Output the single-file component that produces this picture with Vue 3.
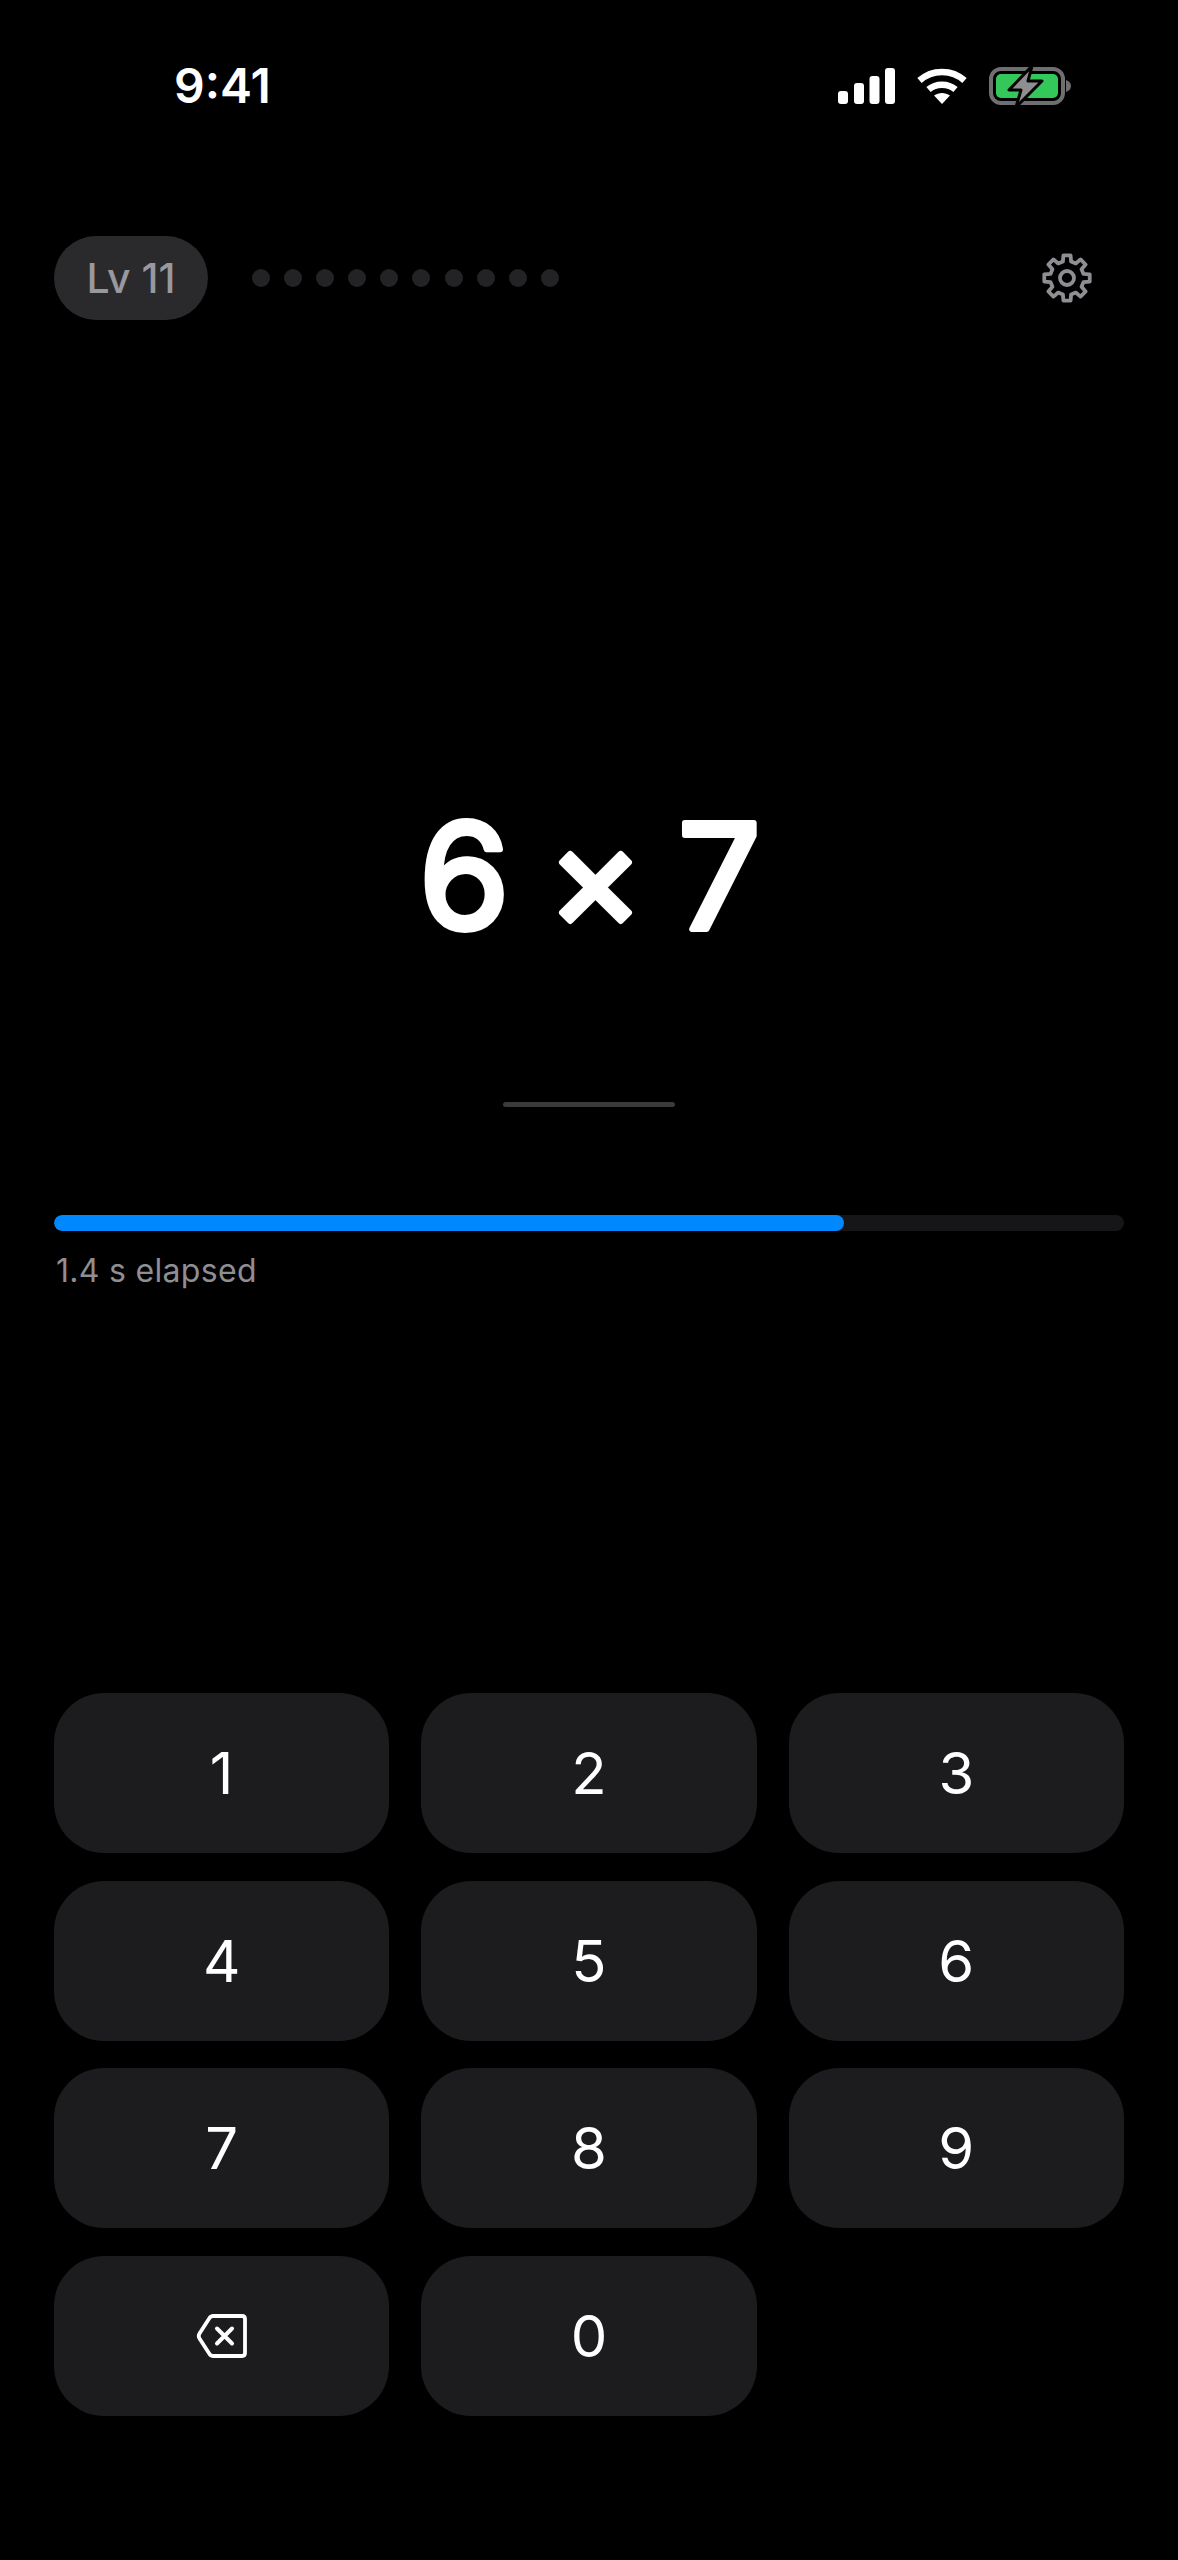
<template>
  <div class="screen">
    <!-- Status bar -->
    <div class="status">
      <span class="time">9:41</span>
      <div class="status-icons">
        <svg class="signal" width="57" height="36" viewBox="0 0 57 36" fill="#fff">
          <rect x="0" y="23" width="10" height="13" rx="3" />
          <rect x="16" y="15" width="10" height="21" rx="3" />
          <rect x="31.500" y="8" width="10" height="28" rx="3" />
          <rect x="47" y="0" width="10" height="36" rx="3" />
        </svg>
        <svg class="wifi" width="50" height="37" viewBox="0 0 50 37" fill="none" stroke="#fff" stroke-width="6.500">
          <path d="M2.500 12.500 C15 1 35 1 47.500 12.500" />
          <path d="M11.500 21.500 C19 15 31 15 38.500 21.500" />
          <path d="M17 27.500 C22 24 28 24 33 27.500 L25 36 Z" fill="#fff" stroke="none" />
        </svg>
        <svg class="battery" width="82" height="38" viewBox="0 0 82 38" fill="none">
          <rect x="2" y="2" width="72" height="34" rx="10" stroke="#6f6f71" stroke-width="4" />
          <rect x="7" y="7" width="62" height="24" rx="5" fill="#34c759" />
          <path d="M77 13 C80 14 82 16 82 19 C82 22 80 24 77 25 Z" fill="#6f6f71" />
          <path d="M43 -1 L20 23 H32 L27 40 L53 14 H39 Z" fill="#8e8e90" stroke="#000" stroke-width="3" stroke-linejoin="round" />
        </svg>
      </div>
    </div>

    <!-- Level and settings -->
    <div class="top-row">
      <div class="level">Lv 11</div>
      <div class="dots">
        <span v-for="n in 10" :key="n" class="dot"></span>
      </div>
      <svg class="gear" width="52" height="52" viewBox="0 0 52 52" fill="none" stroke="#8e8e93" stroke-width="3.800" stroke-linejoin="round">
        <path :d="gearPath" />
        <circle cx="26" cy="26" r="7" />
      </svg>
    </div>

    <!-- Question -->
    <svg class="question" width="1178" height="190" viewBox="0 0 1178 190">
      <text class="question-text" y="149">
        <tspan x="419">6</tspan>
        <tspan x="547" class="times">×</tspan>
        <tspan x="678">7</tspan>
      </text>
    </svg>

    <div class="answer-line"></div>

    <!-- Timer -->
    <div class="progress">
      <div class="progress-fill" :style="{ width: progress + '%' }"></div>
    </div>
    <div class="elapsed">1.4 s elapsed</div>

    <!-- Keypad -->
    <div class="keypad">
      <button v-for="k in keys" :key="k" class="key">{{ k }}</button>
      <button class="key" aria-label="Delete">
        <svg width="52" height="46" viewBox="0 0 52 46" fill="none" stroke="#fff" stroke-width="3.800" stroke-linejoin="round" stroke-linecap="round">
          <path d="M17 3 H46 Q49 3 49 6 V40 Q49 43 46 43 H17 Q15.500 43 14 41.800 L3.500 25.500 Q2 23 3.500 20.500 L14 4.200 Q15.500 3 17 3 Z" />
          <path d="M21 15.500 L36 30.500 M36 15.500 L21 30.500" stroke-width="4" />
        </svg>
      </button>
      <button class="key">0</button>
    </div>
  </div>
</template>

<script setup>
  import { computed, ref } from "vue";

  const keys = ["1", "2", "3", "4", "5", "6", "7", "8", "9"];
  const progress = ref(73.8);

  // Gear outline with 8 teeth
  const gearPath = computed(() => {
    const c = 26;
    const outer = 23;
    const inner = 17;
    const pts = [];
    for (let i = 0; i < 8; i++) {
      const a = (i * Math.PI) / 4 - Math.PI / 2;
      const s = Math.PI / 8;
      const at = (r, t) => [c + r * Math.cos(t), c + r * Math.sin(t)];
      pts.push(at(inner, a - s * 0.62), at(outer, a - s * 0.4), at(outer, a + s * 0.4), at(inner, a + s * 0.62));
    }
    return "M" + pts.map((p) => p[0].toFixed(2) + " " + p[1].toFixed(2)).join(" L") + " Z";
  });
</script>

<style scoped>
  .screen {
    width: 1178px;
    height: 2560px;
    background: #000;
    color: #fff;
    font-family: Inter, "Liberation Sans", sans-serif;
    overflow: hidden;
    display: flex;
    flex-direction: column;
  }

  .status {
    height: 38px;
    margin-top: 67px;
    padding: 0 107px 0 174px;
    display: flex;
    justify-content: space-between;
    align-items: center;
  }

  .time {
    font-size: 48px;
    font-weight: 600;
    line-height: 38px;
  }

  .status-icons {
    display: flex;
    align-items: center;
    gap: 22px;
  }

  .top-row {
    margin-top: 131px;
    padding: 0 54px;
    height: 84px;
    display: flex;
    align-items: center;
  }

  .level {
    width: 154px;
    height: 84px;
    border-radius: 42px;
    background: #2a2a2c;
    color: #98989e;
    font-size: 41px;
    font-weight: 500;
    line-height: 84px;
    text-align: center;
  }

  .dots {
    margin-left: 44px;
    display: flex;
    gap: 14.100px;
  }

  .dot {
    width: 18px;
    height: 18px;
    border-radius: 50%;
    background: #232325;
  }

  .gear {
    margin-left: auto;
    margin-right: 31px;
  }

  .question {
    display: block;
    margin-top: 460px;
  }

  .question-text {
    font-size: 146px;
    font-weight: 400;
    fill: #fff;
    stroke: #fff;
    stroke-width: 6px;
    stroke-linejoin: round;
    stroke-linecap: round;
  }

  .answer-line {
    width: 172px;
    height: 5px;
    margin: 132px auto 0;
    border-radius: 3px;
    background: #3a3a3c;
  }

  .progress {
    height: 16px;
    margin: 108px 54px 0;
    border-radius: 8px;
    background: #161618;
    overflow: hidden;
  }

  .progress-fill {
    height: 100%;
    border-radius: 8px;
    background: #0088ff;
  }

  .elapsed {
    margin: 20px 0 0 56px;
    color: #8e8e93;
    font-size: 32px;
    letter-spacing: 0.3px;
    line-height: 40px;
  }

  .keypad {
    margin: 0 54px;
    margin-top: 402px;
    display: grid;
    grid-template-columns: repeat(3, 1fr);
    grid-auto-rows: 160px;
    column-gap: 32px;
    row-gap: 27.500px;
  }

  .key {
    border: none;
    padding: 0;
    border-radius: 50px;
    background: #1c1c1e;
    color: #fff;
    font-family: inherit;
    font-size: 58px;
    font-weight: 400;
    display: flex;
    align-items: center;
    justify-content: center;
  }
</style>

<style>
  html,
  body {
    background: #000;
  }
</style>
